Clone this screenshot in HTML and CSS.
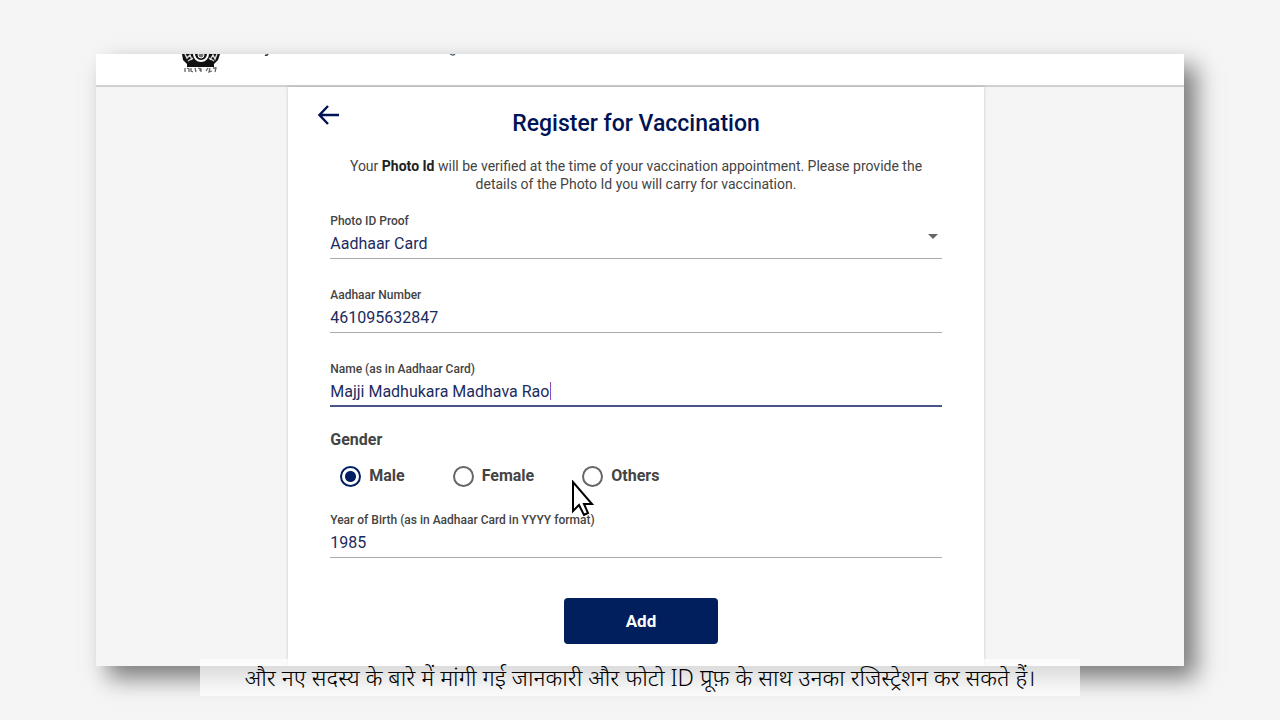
FILE: index.html
```
<!DOCTYPE html>
<html lang="en">
<head>
  <meta charset="UTF-8">
  <meta name="viewport" content="width=device-width, initial-scale=1.0">
  <title>Register for Vaccination</title>
  <link rel="stylesheet" href="styles.css">
</head>
<body>
  <div class="screen">
    <header class="topbar">
      <svg class="emblem" viewBox="0 0 40 20" aria-hidden="true">
        <path d="M1 0h38l-2 6-4 4v3H6v-3L2 6z" fill="#111"/>
        <path d="M4 0l2 4 3-3 2 5M29 6l3-5 2 4 2-5M7 7l5-3M33 7l-5-3" fill="none" stroke="#ddd" stroke-width="1.4"/>
        <path d="M13 0a7 7 0 0 0 14 0" fill="#111" stroke="#fff" stroke-width="2"/>
        <circle cx="20" cy="1" r="3" fill="#777" stroke="#fff" stroke-width="1"/>
        <path d="M4 14v4M6 14l2 1v3M10 14v3l2 1M14 14l1 4M17 14l3 1v3M19 14v3M25 17l2-3M29 14l-1 4 3-1M32 14h3l-1 4" fill="none" stroke="#666" stroke-width="1.3"/>
      </svg>
      <svg class="marks" viewBox="0 0 270 6" aria-hidden="true">
        <path d="M5 0q-1 2-3 1" fill="none" stroke="#333" stroke-width="1.5"/>
        <path d="M187 0q3 2 5 0" fill="none" stroke="#567" stroke-width="1.5"/>
      </svg>
    </header>
    <main class="content">
      <form class="card">
        <button class="back" type="button" aria-label="Back">
          <svg width="22" height="20" viewBox="0 0 22 20"><path d="M21 10H2M10 1L1.500 10l8.500 9" fill="none" stroke="#001354" stroke-width="2.400"/></svg>
        </button>
        <h1>Register for Vaccination</h1>
        <p class="intro">Your <b>Photo Id</b> will be verified at the time of your vaccination appointment. Please provide the details of the Photo Id you will carry for vaccination.</p>
        <div class="fields">
          <div class="field dropdown">
            <label for="proof">Photo ID Proof</label>
            <select id="proof">
              <option>Aadhaar Card</option>
            </select>
          </div>
          <div class="field">
            <label for="number">Aadhaar Number</label>
            <input type="text" id="number" value="461095632847">
          </div>
          <div class="field active">
            <label for="name">Name (as in Aadhaar Card)</label>
            <input type="text" id="name" value="Majji Madhukara Madhava Rao">
            <span class="caret"></span>
          </div>
        </div>
        <fieldset class="gender">
          <legend>Gender</legend>
          <div class="options">
            <label><input type="radio" name="gender" checked>Male</label>
            <label><input type="radio" name="gender">Female</label>
            <label><input type="radio" name="gender">Others</label>
            <svg class="pointer" width="24" height="38" viewBox="0 0 24 38" aria-hidden="true"><path d="M2 2v29l6-6 5 10 4-2-4-9h8z" fill="#fff" stroke="#000" stroke-width="2"/></svg>
          </div>
        </fieldset>
        <div class="field">
          <label for="year">Year of Birth (as in Aadhaar Card in YYYY format)</label>
          <input type="text" id="year" value="1985">
        </div>
        <div class="actions">
          <button class="add" type="submit">Add</button>
        </div>
      </form>
    </main>
  </div>
  <p class="caption" lang="hi">और नए सदस्य के बारे में मांगी गई जानकारी और फोटो ID प्रूफ़ के साथ उनका रजिस्ट्रेशन कर सकते हैं।</p>
</body>
</html>
```
FILE: styles.css
```
* {
  box-sizing: border-box;
}
body {
  background: #f5f5f5;
  color: #444;
  font-family: Roboto, "Liberation Sans", sans-serif;
  margin: 0;
  min-height: 100vh;
  padding: 54px 7.5%;
  position: relative;
}
.screen {
  background: #f5f5f5;
  box-shadow: 12px 12px 22px rgba(0, 0, 0, .5);
  display: flex;
  flex-direction: column;
  height: calc(100vh - 108px);
  overflow: hidden;
}
.topbar {
  background: #fff;
  border-bottom: 2px solid #d0d0d0;
  display: flex;
  flex: none;
  gap: 42px;
  height: 33px;
  padding-left: 85px;
}
.emblem {
  height: 20px;
  width: 40px;
}
.marks {
  height: 6px;
  width: 270px;
}
.content {
  display: flex;
  flex: 1;
  justify-content: center;
  padding-right: 8px;
}
.card {
  background: #fff;
  box-shadow: 0 0 3px rgba(0, 0, 0, .2);
  padding: 23px 42px;
  position: relative;
  width: 64.4%;
}
.back {
  background: none;
  border: 0;
  left: 30px;
  line-height: 0;
  padding: 0;
  position: absolute;
  top: 18px;
}
h1 {
  color: #001354;
  font-size: 23px;
  font-weight: 500;
  line-height: 28px;
  margin: 0 0 19px;
  text-align: center;
}
.intro {
  font-size: 14px;
  line-height: 18px;
  margin: 0 0 19px;
  text-align: center;
}
.intro b {
  color: #222;
}
.fields {
  display: grid;
  gap: 27px;
}
.field {
  border-bottom: 1px solid #aaa;
  height: 47px;
  position: relative;
}
.field label {
  display: block;
  font-size: 12px;
  font-weight: 500;
  line-height: 18px;
}
.field input,
.field select {
  appearance: none;
  background: none;
  border: 0;
  color: #1c2b60;
  display: block;
  font: 16px/27px Roboto, "Liberation Sans", sans-serif;
  height: 27px;
  outline: 0;
  padding: 0;
  width: 100%;
}
.dropdown::after {
  border: 5px solid transparent;
  border-bottom: 0;
  border-top-color: #666;
  content: "";
  position: absolute;
  right: 4px;
  top: 22px;
}
.active {
  border-bottom: 2px solid #4a5488;
}
.caret {
  background: #8a50c0;
  height: 18px;
  left: 220px;
  position: absolute;
  top: 22px;
  width: 1px;
}
.gender {
  border: 0;
  font-size: 16px;
  font-weight: 700;
  margin: 21px 0 24px;
  padding: 0;
}
.gender legend {
  line-height: 24px;
  padding: 0;
}
.options {
  display: flex;
  gap: 48px;
  margin-top: 13px;
  padding-left: 10px;
  position: relative;
}
.options label {
  align-items: center;
  display: flex;
  gap: 8px;
  line-height: 22px;
}
.options input {
  appearance: none;
  border: 2px solid #666;
  border-radius: 50%;
  height: 21px;
  margin: 0;
  width: 21px;
}
.options input:checked {
  background: radial-gradient(circle, #001f60 5px, #fff 6px);
  border-color: #001f60;
}
.pointer {
  left: 241px;
  position: absolute;
  top: 15px;
  z-index: 1;
}
.actions {
  display: flex;
  justify-content: center;
  margin-top: 40px;
  padding-left: 10px;
}
.add {
  background: #001f5c;
  border: 0;
  border-radius: 4px;
  color: #fff;
  font: 700 17px/24px Roboto, "Liberation Sans", sans-serif;
  height: 46px;
  width: 154px;
}
.caption {
  background: rgba(255, 255, 255, .7);
  bottom: 24px;
  color: #000;
  font: 300 23px/37px "Noto Sans", "Noto Sans Devanagari", sans-serif;
  left: 200px;
  margin: 0;
  position: absolute;
  right: 200px;
  text-align: center;
}
```
